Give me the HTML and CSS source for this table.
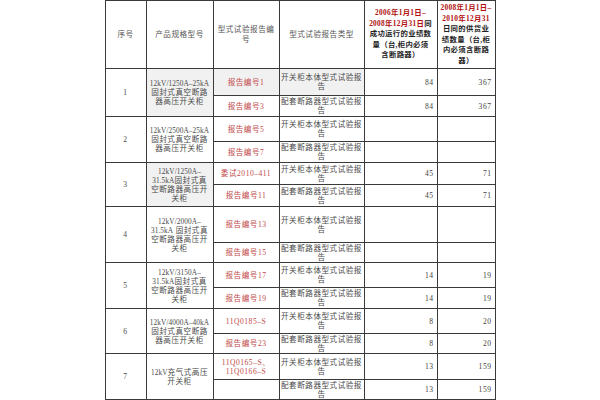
FILE: index.html
```html
<!DOCTYPE html>
<html lang="zh">
<head>
<meta charset="utf-8">
<title>型式试验报告</title>
<link rel="stylesheet" href="styles.css">
</head>
<body>
<table class="sheet">
  <colgroup>
    <col class="c1"><col class="c2"><col class="c3"><col class="c4"><col class="c5"><col class="c6">
  </colgroup>
  <tr class="hd">
    <td>序号</td>
    <td>产品规格型号</td>
    <td class="lt">型式试验报告编<br>号</td>
    <td>型式试验报告类型</td>
    <td class="bold"><span class="red">2006年1月1日–<br>2008年12月31日</span>同<br>成功运行的业绩数<br>量（台,柜内必须<br>含断路器）</td>
    <td class="bold"><span class="red">2008年1月1日–<br>2010年12月31</span><br>日同的供货业<br>绩数量（台,柜<br>内必须含断路<br>器）</td>
  </tr>

  <tr class="r1a">
    <td rowspan="2">1</td>
    <td rowspan="2" class="gray"><span class="lat">12kV/1250A–25kA</span><br>固封式真空断路<br>器高压开关柜</td>
    <td class="red gray">报告编号1</td>
    <td class="gray">开关柜本体型式试验报<br>告</td>
    <td class="num">84</td>
    <td class="num">367</td>
  </tr>
  <tr class="r1b">
    <td class="red">报告编号3</td>
    <td>配套断路器型式试验报<br>告</td>
    <td class="num">84</td>
    <td class="num">367</td>
  </tr>

  <tr class="r2a">
    <td rowspan="2">2</td>
    <td rowspan="2"><span class="lat">12kV/2500A–25kA</span><br>固封式真空断路<br>器高压开关柜</td>
    <td class="red">报告编号5</td>
    <td>开关柜本体型式试验报<br>告</td>
    <td class="num"></td>
    <td class="num"></td>
  </tr>
  <tr class="r2b">
    <td class="red">报告编号7</td>
    <td>配套断路器型式试验报<br>告</td>
    <td class="num"></td>
    <td class="num"></td>
  </tr>

  <tr class="r3a">
    <td rowspan="2">3</td>
    <td rowspan="2" class="gray"><span class="lat">12kV/1250A–</span><br><span class="lat">31.5kA</span>固封式真<br>空断路器高压开<br>关柜</td>
    <td class="red">委试2010–411</td>
    <td>开关柜本体型式试验报<br>告</td>
    <td class="num">45</td>
    <td class="num">71</td>
  </tr>
  <tr class="r3b">
    <td class="red">报告编号11</td>
    <td>配套断路器型式试验报<br>告</td>
    <td class="num">45</td>
    <td class="num">71</td>
  </tr>

  <tr class="r4a">
    <td rowspan="2">4</td>
    <td rowspan="2"><span class="lat">12kV/2000A–</span><br><span class="lat">31.5kA</span> 固封式真<br>空断路器高压开<br>关柜</td>
    <td class="red">报告编号13</td>
    <td>开关柜本体型式试验报<br>告</td>
    <td class="num"></td>
    <td class="num"></td>
  </tr>
  <tr class="r4b">
    <td class="red">报告编号15</td>
    <td>配套断路器型式试验报<br>告</td>
    <td class="num"></td>
    <td class="num"></td>
  </tr>

  <tr class="r5a">
    <td rowspan="2">5</td>
    <td rowspan="2"><span class="lat">12kV/3150A–</span><br><span class="lat">31.5kA</span>固封式真<br>空断路器高压开<br>关柜</td>
    <td class="red">报告编号17</td>
    <td>开关柜本体型式试验报<br>告</td>
    <td class="num">14</td>
    <td class="num">19</td>
  </tr>
  <tr class="r5b">
    <td class="red">报告编号19</td>
    <td>配套断路器型式试验报<br>告</td>
    <td class="num">14</td>
    <td class="num">19</td>
  </tr>

  <tr class="r6a">
    <td rowspan="2">6</td>
    <td rowspan="2"><span class="lat">12kV/4000A–40kA</span><br>固封式真空断路<br>器高压开关柜</td>
    <td class="red">11Q0185–S</td>
    <td>开关柜本体型式试验报<br>告</td>
    <td class="num">8</td>
    <td class="num">20</td>
  </tr>
  <tr class="r6b">
    <td class="red">报告编号23</td>
    <td>配套断路器型式试验报<br>告</td>
    <td class="num">8</td>
    <td class="num">20</td>
  </tr>

  <tr class="r7a">
    <td rowspan="2">7</td>
    <td rowspan="2"><span class="lat">12kV</span>充气式高压<br>开关柜</td>
    <td class="red">11Q0165–S、<br>11Q0166–S</td>
    <td>开关柜本体型式试验报<br>告</td>
    <td class="num">13</td>
    <td class="num">159</td>
  </tr>
  <tr class="r7b">
    <td></td>
    <td>配套断路器型式试验报<br>告</td>
    <td class="num">13</td>
    <td class="num">159</td>
  </tr>
</table>
</body>
</html>
```

FILE: styles.css
```css
html, body {
  margin: 0;
  padding: 0;
  background: #ffffff;
}

.sheet {
  margin: 0 auto;
  width: 390px;
  table-layout: fixed;
  border-collapse: collapse;
  font-family: "Liberation Serif", "Noto Sans CJK SC", serif;
  font-size: 7.6px;
  letter-spacing: 0.5px;
  line-height: 9px;
  color: #4a4a4a;
}

.c1 { width: 41px; }
.c2 { width: 67px; }
.c3 { width: 66px; }
.c4 { width: 85px; }
.c5 { width: 73px; }
.c6 { width: 58px; }

.sheet td {
  border: 1px solid #3a3a3a;
  padding: 0;
  text-align: center;
  vertical-align: middle;
  white-space: nowrap;
  overflow: visible;
}

.sheet td:nth-child(3) { border-left-color: #111; }

.lat {
  font-size: 7.3px;
  letter-spacing: 0.1px;
}

.red { color: #c24a4a; }

.gray { background: #f1f1f1; }

.hd { height: 68px; }
.hd td { color: #555; line-height: 10px; }
.hd td.bold {
  font-weight: bold;
  font-size: 7.4px;
  color: #222;
  letter-spacing: 0.3px;
  line-height: 10.5px;
}
.hd td.bold .red { color: #b01010; }

.sheet td.num {
  text-align: right;
  padding-right: 3px;
  color: #444;
}

.r1a { height: 27px; }
.r1b { height: 21px; }
.r2a { height: 25px; }
.r2b { height: 21px; }
.r3a { height: 22px; }
.r3b { height: 22px; }
.r4a { height: 36px; }
.r4b { height: 20px; }
.r5a { height: 25px; }
.r5b { height: 21px; }
.r6a { height: 25px; }
.r6b { height: 20px; }
.r7a { height: 26px; }
.r7b { height: 20px; }
```
